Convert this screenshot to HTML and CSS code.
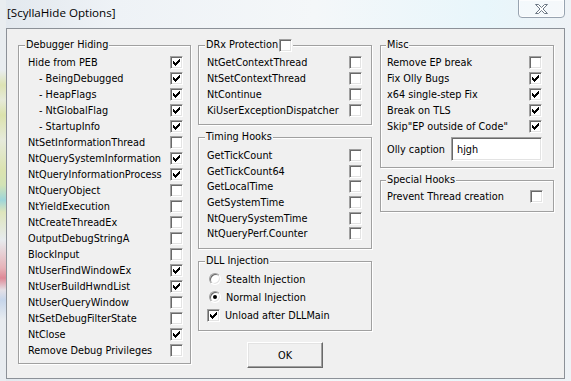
FILE: index.html
```html
<!DOCTYPE html>
<html lang="en">
<head>
    <meta charset="UTF-8">
    <title>[ScyllaHide Options]</title>
    <link rel="stylesheet" href="styles.css">
</head>
<body>
    <svg class="defs" width="0" height="0">
        <symbol id="tick" viewBox="0 0 7 7">
            <path d="M6 0h1v1h-1z M5 1h2v1h-2z M0 2h1v1h-1z M4 2h3v1h-3z M0 3h2v1h-2z M3 3h3v1h-3z M0 4h5v1h-5z M1 5h3v1h-3z M2 6h1v1h-1z" fill="#000"/>
        </symbol>
    </svg>

    <div class="titlebar">
        <span class="title">[ScyllaHide Options]</span>
        <span class="close">
            <svg width="13" height="10" viewBox="0 0 13 10">
                <path d="M0.5 0.5h3l3 3 3-3h3l-4.5 4.5 4.5 4.5h-3l-3-3-3 3h-3l4.5-4.5z" fill="#fff" stroke="#6d7885" stroke-width="1"/>
            </svg>
        </span>
    </div>

    <div class="client">
        <div class="col col-left">
            <div class="group hiding">
                <span class="caption">Debugger Hiding</span>
                <div class="row"><span>Hide from PEB</span><span class="check"><svg><use href="#tick"/></svg></span></div>
                <div class="row sub"><span>- BeingDebugged</span><span class="check"><svg><use href="#tick"/></svg></span></div>
                <div class="row sub"><span>- HeapFlags</span><span class="check"><svg><use href="#tick"/></svg></span></div>
                <div class="row sub"><span>- NtGlobalFlag</span><span class="check"><svg><use href="#tick"/></svg></span></div>
                <div class="row sub"><span>- StartupInfo</span><span class="check"><svg><use href="#tick"/></svg></span></div>
                <div class="row"><span>NtSetInformationThread</span><span class="check"></span></div>
                <div class="row"><span>NtQuerySystemInformation</span><span class="check"><svg><use href="#tick"/></svg></span></div>
                <div class="row"><span>NtQueryInformationProcess</span><span class="check"><svg><use href="#tick"/></svg></span></div>
                <div class="row"><span>NtQueryObject</span><span class="check"></span></div>
                <div class="row"><span>NtYieldExecution</span><span class="check"></span></div>
                <div class="row"><span>NtCreateThreadEx</span><span class="check"></span></div>
                <div class="row"><span>OutputDebugStringA</span><span class="check"></span></div>
                <div class="row"><span>BlockInput</span><span class="check"></span></div>
                <div class="row"><span>NtUserFindWindowEx</span><span class="check"><svg><use href="#tick"/></svg></span></div>
                <div class="row"><span>NtUserBuildHwndList</span><span class="check"><svg><use href="#tick"/></svg></span></div>
                <div class="row"><span>NtUserQueryWindow</span><span class="check"></span></div>
                <div class="row"><span>NtSetDebugFilterState</span><span class="check"></span></div>
                <div class="row"><span>NtClose</span><span class="check"><svg><use href="#tick"/></svg></span></div>
                <div class="row"><span>Remove Debug Privileges</span><span class="check"></span></div>
            </div>
        </div>

        <div class="col col-mid">
            <div class="group drx">
                <span class="caption">DRx Protection <span class="check"></span></span>
                <div class="row"><span>NtGetContextThread</span><span class="check"></span></div>
                <div class="row"><span>NtSetContextThread</span><span class="check"></span></div>
                <div class="row"><span>NtContinue</span><span class="check"></span></div>
                <div class="row"><span>KiUserExceptionDispatcher</span><span class="check"></span></div>
            </div>
            <div class="group timing">
                <span class="caption">Timing Hooks</span>
                <div class="row"><span>GetTickCount</span><span class="check"></span></div>
                <div class="row"><span>GetTickCount64</span><span class="check"></span></div>
                <div class="row"><span>GetLocalTime</span><span class="check"></span></div>
                <div class="row"><span>GetSystemTime</span><span class="check"></span></div>
                <div class="row"><span>NtQuerySystemTime</span><span class="check"></span></div>
                <div class="row"><span>NtQueryPerf.Counter</span><span class="check"></span></div>
            </div>
            <div class="group dll">
                <span class="caption">DLL Injection</span>
                <div class="row opt"><span class="radio"></span><span>Stealth Injection</span></div>
                <div class="row opt"><span class="radio on"></span><span>Normal Injection</span></div>
                <div class="row opt boxed"><span class="check"><svg><use href="#tick"/></svg></span><span>Unload after DLLMain</span></div>
            </div>
            <button class="ok">OK</button>
        </div>

        <div class="col col-right">
            <div class="group misc">
                <span class="caption">Misc</span>
                <div class="row"><span>Remove EP break</span><span class="check"></span></div>
                <div class="row"><span>Fix Olly Bugs</span><span class="check"><svg><use href="#tick"/></svg></span></div>
                <div class="row"><span>x64 single-step Fix</span><span class="check"><svg><use href="#tick"/></svg></span></div>
                <div class="row"><span>Break on TLS</span><span class="check"><svg><use href="#tick"/></svg></span></div>
                <div class="row"><span>Skip"EP outside of Code"</span><span class="check"><svg><use href="#tick"/></svg></span></div>
                <div class="caption-row"><span>Olly caption</span><span class="edit">hjgh</span></div>
            </div>
            <div class="group special">
                <span class="caption">Special Hooks</span>
                <div class="row"><span>Prevent Thread creation</span><span class="check"></span></div>
            </div>
        </div>
    </div>
</body>
</html>
```

FILE: styles.css
```css
* {
    box-sizing: border-box;
}
body {
    margin: 0;
    width: 571px;
    height: 381px;
    overflow: hidden;
    font-family: "DejaVu Sans", "Liberation Sans", sans-serif;
    font-stretch: condensed;
    font-size: 10.8px;
    color: #000;
    background:
        linear-gradient(to bottom, #e9edf0 0, #e9edf0 70px, #dde3b4 85px, #e6ead9 100px, #dbe2ac 115px, #e6eadb 140px, #dbe3b0 170px, #d2e3b6 185px, #9dd6da 200px, #dee5bc 212px, #e7ebee 240px, #e6b2b8 268px, #de8896 278px, #e4e0e6 290px, #c6d5ea 300px, #e8ecf0 320px) 0 0 / 6px 100% no-repeat,
        linear-gradient(90deg, #e2e8ee 0, #eef2f6 20%, #f4f7f9 55%, #e8f6fb 85%, #eef2f6 100%);
}
.defs {
    position: absolute;
}

/* window frame */
.titlebar {
    height: 28px;
    display: flex;
    align-items: flex-start;
}
.title {
    font-family: "Open Sans", "Liberation Sans", sans-serif;
    font-stretch: normal;
    font-size: 11.6px;
    line-height: 16px;
    margin: 5px 0 0 7px;
}
.close {
    margin: -1px 6px 0 auto;
    width: 47px;
    height: 19px;
    border: 1px solid #98a3b0;
    border-radius: 0 0 4px 4px;
    background: rgba(255, 255, 255, 0.45);
    box-shadow: inset 0 0 0 1px rgba(255, 255, 255, 0.7);
    display: flex;
    justify-content: center;
    align-items: center;
    padding-top: 1px;
}

/* dialog body */
.client {
    margin-left: 6px;
    width: 559px;
    height: 351px;
    border: 1px solid #8c9198;
    background: #f0f0f0;
    padding: 16px 0 0 11px;
    display: flex;
    gap: 7px;
}
.col {
    display: flex;
    flex-direction: column;
}
.col-left {
    width: 173px;
}
.col-mid {
    width: 174px;
}
.col-right {
    width: 174px;
    margin-left: 1px;
}

.group {
    position: relative;
    border: 1px solid #a0a0a0;
    box-shadow: 1px 1px 0 #fff, inset 1px 1px 0 #fff;
}
.caption {
    position: absolute;
    top: -8px;
    left: 6px;
    padding: 0 1px;
    line-height: 14px;
    background: #f0f0f0;
    display: flex;
    align-items: center;
    gap: 1px;
}
.row {
    height: 16px;
    display: flex;
    align-items: center;
    justify-content: space-between;
    white-space: nowrap;
}
.row.sub {
    padding-left: 11px;
}

.hiding {
    height: 319px;
    padding: 8px 7px 0 9px;
}
.drx {
    height: 80px;
    padding: 8px 9px 0 8px;
}
.timing {
    height: 112px;
    margin-top: 12px;
    padding: 10px 9px 0 8px;
}
.timing .row {
    height: 15.6px;
}
.dll {
    height: 70px;
    margin-top: 12px;
    padding: 8px 9px 0 10px;
}
.dll .row {
    height: 18px;
    justify-content: flex-start;
    gap: 5px;
}
.dll .boxed {
    margin-left: -2px;
}
.misc {
    height: 123px;
    padding: 8px 11px 0 6px;
}
.misc .caption {
    left: 5px;
}
.special {
    height: 32px;
    margin-top: 12px;
    padding: 7px 10px 0 6px;
}
.special .caption {
    left: 5px;
}

/* classic controls */
.check {
    width: 13px;
    height: 13px;
    flex: none;
    background: #fff;
    border: 1px solid;
    border-color: #a0a0a0 #fff #fff #a0a0a0;
    box-shadow: inset 1px 1px 0 #696969, inset -1px -1px 0 #e3e3e3;
    display: flex;
    justify-content: center;
    align-items: center;
}
.check svg {
    width: 7px;
    height: 7px;
    shape-rendering: crispEdges;
}
.radio {
    width: 12px;
    height: 12px;
    flex: none;
    border-radius: 50%;
    background: #fff;
    border: 1px solid;
    border-color: #a0a0a0 #fff #fff #a0a0a0;
    box-shadow: inset 1px 1px 0 #696969, inset -1px -1px 0 #e3e3e3;
    display: flex;
    justify-content: center;
    align-items: center;
}
.radio.on::after {
    content: "";
    width: 4px;
    height: 4px;
    border-radius: 50%;
    background: #000;
}
.caption-row {
    margin-top: 3px;
    display: flex;
    align-items: center;
    justify-content: space-between;
}
.edit {
    width: 91px;
    height: 24px;
    background: #fff;
    border: 1px solid;
    border-color: #a0a0a0 #fff #fff #a0a0a0;
    box-shadow: inset 1px 1px 0 #696969, inset -1px -1px 0 #e3e3e3;
    padding-left: 5px;
    display: flex;
    align-items: center;
}
.ok {
    align-self: center;
    margin-top: 11px;
    width: 76px;
    height: 26px;
    font: inherit;
    color: #000;
    background: #f0f0f0;
    border: 1px solid;
    border-color: #fff #696969 #696969 #fff;
    box-shadow: inset -1px -1px 0 #a0a0a0, inset 1px 1px 0 #e3e3e3;
    padding: 0;
}
```
